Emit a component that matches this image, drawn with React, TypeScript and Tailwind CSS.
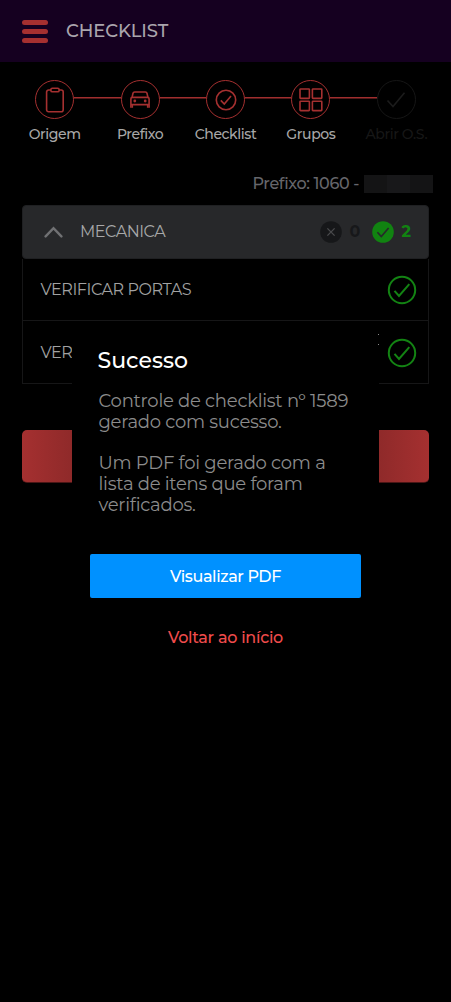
import { ReactNode } from 'react';

function ClipboardIcon() {
  return (
    <svg width="20" height="26" viewBox="0 0 20 26" fill="none" stroke="currentColor" strokeWidth="1.6">
      <path d="M6 3H3.6A2 2 0 0 0 1.6 5V22.8a2 2 0 0 0 2 2H16.2a2 2 0 0 0 2-2V5a2 2 0 0 0-2-2H14" />
      <rect x="5.9" y="1.2" width="8.2" height="3.6" rx="1.4" />
    </svg>
  );
}

function CarIcon() {
  return (
    <svg width="20" height="17" viewBox="0 0 20 17" fill="none" stroke="currentColor" strokeWidth="1.6">
      <path d="M2 6.6 3 2.2Q3.3 1 4.6 1H15.4Q16.7 1 17 2.2L18 6.6" />
      <path d="M.9 16.8V8Q.9 6.4 2.4 6.4H17.6Q19.1 6.4 19.1 8V16.8M.9 13.6H19.1" />
      <path d="M2.3 14V16.8M17.7 14V16.8" />
      <circle cx="4.8" cy="10" r="1.4" fill="currentColor" stroke="none" />
      <circle cx="15.2" cy="10" r="1.4" fill="currentColor" stroke="none" />
    </svg>
  );
}

function SmallCheckCircle() {
  return (
    <svg width="22" height="22" viewBox="0 0 22 22" fill="none" stroke="currentColor" strokeWidth="1.6">
      <circle cx="11" cy="11" r="9.7" />
      <path d="M5.8 11.4 9.3 15 16 7" />
    </svg>
  );
}

function CheckCircle() {
  return (
    <svg width="30" height="30" viewBox="0 0 30 30" fill="none" stroke="currentColor" strokeWidth="2">
      <circle cx="15" cy="15" r="13.2" />
      <path d="M7.5 15.8 12 21 22.3 9.2" />
    </svg>
  );
}

function GridIcon() {
  return (
    <svg width="24" height="24" viewBox="0 0 24 24" fill="none" stroke="currentColor" strokeWidth="1.6">
      <rect x="1" y="1" width="9.4" height="9.4" rx="0.6" />
      <rect x="13.4" y="1" width="9.4" height="9.4" rx="0.6" />
      <rect x="1" y="13.2" width="9.4" height="9.4" rx="0.6" />
      <rect x="13.4" y="13.2" width="9.4" height="9.4" rx="0.6" />
    </svg>
  );
}

function CheckIcon() {
  return (
    <svg width="20" height="18" viewBox="0 0 20 18" fill="none" stroke="currentColor" strokeWidth="1.6">
      <path d="M1.5 9.5 7 15.6 18.5 1.8" />
    </svg>
  );
}

const steps: { label: string; icon: ReactNode }[] = [
  { label: 'Origem', icon: <ClipboardIcon /> },
  { label: 'Prefixo', icon: <CarIcon /> },
  { label: 'Checklist', icon: <SmallCheckCircle /> },
  { label: 'Grupos', icon: <GridIcon /> },
  { label: 'Abrir O.S.', icon: <CheckIcon /> },
];

const line = 'border-t border-t-[#a02e2e] border-b border-b-[#521818]';

function Stepper() {
  return (
    <div className="grid grid-cols-5 px-3 pt-[18px]">
      {steps.map((step, i) => {
        const last = i === steps.length - 1;
        return (
          <div key={step.label} className="flex flex-col items-center">
            <div className="flex w-full items-center">
              <div className={`-mt-[3px] h-0.5 flex-1 ${i === 0 ? '' : line}`} />
              <div
                className={`flex size-[39px] shrink-0 items-center justify-center rounded-full border ${
                  last ? 'border-[#161616] text-[#1b1b1b]' : 'border-[#a53030] text-[#a53030]'
                }`}
              >
                {step.icon}
              </div>
              <div className={`-mt-[3px] h-0.5 flex-1 ${last ? '' : line}`} />
            </div>
            <span
              className={`mt-[5px] whitespace-nowrap text-[14px] font-medium leading-5 tracking-[-0.4px] ${
                last ? 'text-[#171717]' : 'text-[#a8a8a8]'
              }`}
            >
              {step.label}
            </span>
          </div>
        );
      })}
    </div>
  );
}

function Item({ children }: { children: ReactNode }) {
  return (
    <div className="flex items-center justify-between border-x border-b border-[#161617] pl-[17.5px] pr-[11px] pt-px text-[#a2a2a2]">
      <span className="text-[16px] tracking-[-0.43px]">{children}</span>
      <span className="text-[#138313]">
        <CheckCircle />
      </span>
    </div>
  );
}

export default function App() {
  return (
    <div className="relative h-[1002px] w-[451px] overflow-hidden bg-black font-['Montserrat','Inter',sans-serif]">
      <header className="flex h-[62px] items-center bg-[#150020] pl-[22px]">
        <div className="flex w-[26px] flex-col gap-1">
          <span className="h-[5px] rounded-full bg-[#a53030]" />
          <span className="h-[5px] rounded-full bg-[#a53030]" />
          <span className="h-[5px] rounded-full bg-[#a53030]" />
        </div>
        <h1 className="ml-[18px] mt-px text-[18px] font-medium tracking-[-0.1px] text-[#aaa5ad]">CHECKLIST</h1>
      </header>

      <Stepper />

      <div className="mt-[30px] flex h-5 items-center justify-end pr-[18px] text-[#66666b]">
        <span className="mr-[5px] text-[16px] font-medium tracking-[-0.35px]">Prefixo: 1060 -</span>
        <span className="-mt-px flex h-[18px] w-[69px]">
          <span className="flex-1 bg-[#141415]" />
          <span className="flex-1 bg-[#18181a]" />
          <span className="flex-1 bg-[#141415]" />
        </span>
      </div>

      <section className="mx-[22px] mt-[11px]">
        <div className="flex h-[54px] items-center rounded border border-[#1f2022] bg-[#27282a] pl-[21px] pr-[17px]">
          <svg width="19" height="12" viewBox="0 0 19 12" fill="none">
            <path d="M1.6 10.4 9.5 2.2 17.4 10.4" stroke="#707173" strokeWidth="2.4" strokeLinecap="round" />
          </svg>
          <span className="ml-[17px] flex-1 text-[16px] tracking-[-0.45px] text-[#a8a8a9]">MECANICA</span>
          <svg width="22" height="22" viewBox="0 0 22 22" fill="none">
            <circle cx="11" cy="11" r="10.8" fill="#161719" />
            <path d="m7.4 7.4 7.2 7.2m0-7.2-7.2 7.2" stroke="#4a4b4d" strokeWidth="1.3" />
          </svg>
          <span className="ml-[8px] w-[22px] text-[16px] font-bold text-[#17181a]">0</span>
          <svg width="22" height="22" viewBox="0 0 22 22" fill="none">
            <circle cx="11" cy="11" r="10.8" fill="#118311" />
            <path d="m5.4 11.3 3.9 4.3L16.6 7" stroke="#27282a" strokeWidth="1.6" />
          </svg>
          <span className="ml-2 text-[16px] font-bold text-[#118311]">2</span>
        </div>
        <div className="grid grid-rows-[62px_63px]">
          <Item>VERIFICAR PORTAS</Item>
          <Item>VER</Item>
        </div>
      </section>

      <div className="mx-[22px] mt-[46px] h-[53px] rounded-[5px] border-b border-[#4a1616] bg-linear-to-r from-[#a53030] via-[#501717] to-[#a53030]" />

      {/* success dialog */}
      <div role="dialog" className="absolute left-[72px] top-[328px] flex h-[344px] w-[307px] flex-col bg-black">
        <span className="absolute right-0 top-1.5 size-px bg-[#8a8a8a]" />
        <span className="absolute right-0 top-4 size-px bg-[#8a8a8a]" />
        <h2 className="ml-[25.5px] mt-[19px] text-[22px] font-medium leading-7 text-white">Sucesso</h2>
        <div className="ml-[26.5px] mt-[16px] whitespace-nowrap text-[18px] leading-[20.8px] tracking-[-0.25px] text-[#8c8c8c]">
          <p>Controle de checklist nº 1589</p>
          <p>gerado com sucesso.</p>
          <p className="mt-[20.8px]">Um PDF foi gerado com a</p>
          <p>lista de itens que foram</p>
          <p>verificados.</p>
        </div>
        <button className="mx-[18px] mt-[38px] h-[44px] shrink-0 rounded-[2px] bg-[#0091ff] pt-0.5 text-[16px] font-medium tracking-[-0.4px] text-white">
          Visualizar PDF
        </button>
        <button className="mt-[30px] text-[16px] font-medium leading-5 tracking-[-0.27px] text-[#f04c4c]">
          Voltar ao início
        </button>
      </div>
    </div>
  );
}
